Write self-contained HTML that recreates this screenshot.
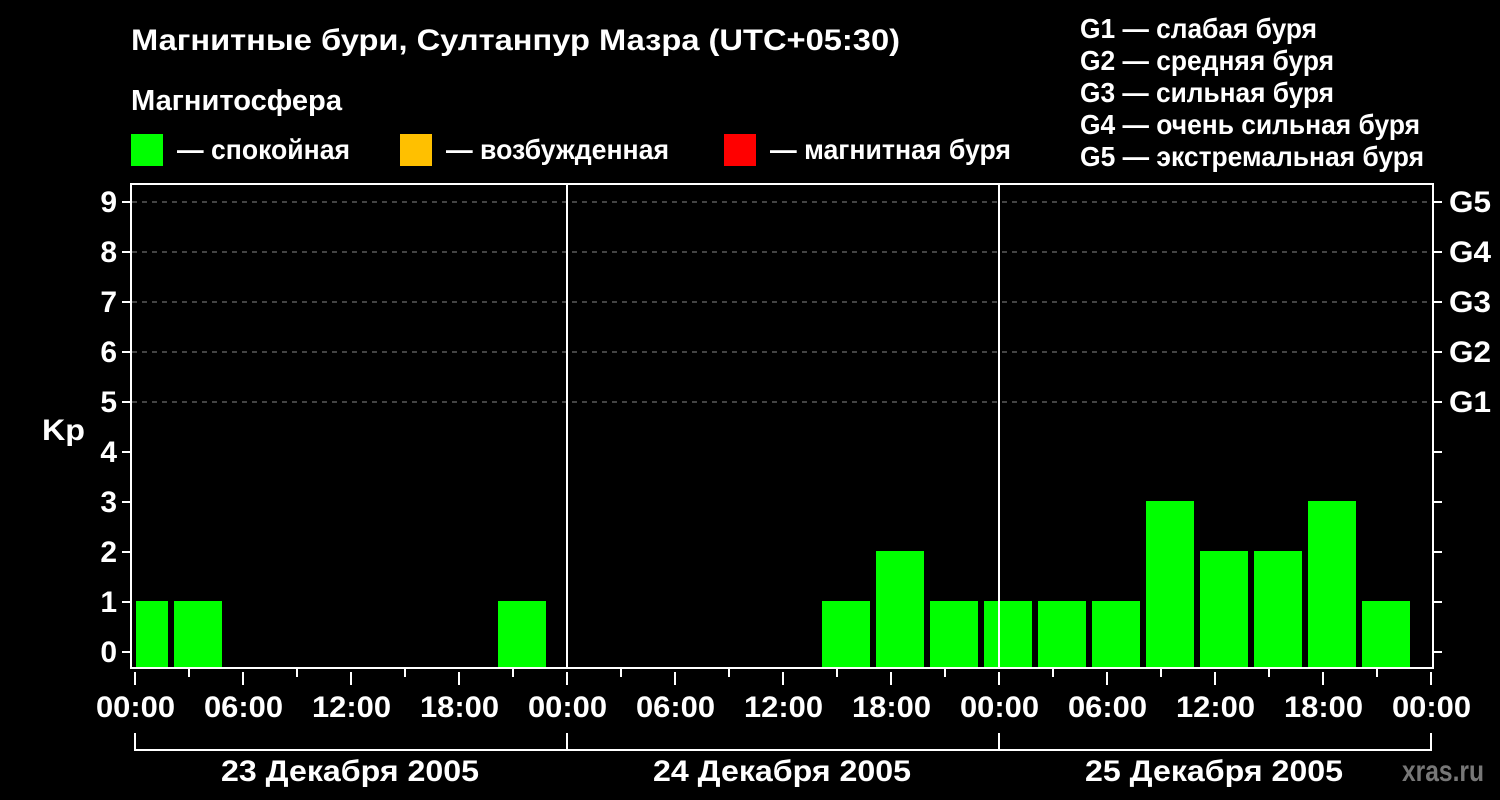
<!DOCTYPE html>
<html><head><meta charset="utf-8"><style>
html,body{margin:0;padding:0;background:#000;width:1500px;height:800px;overflow:hidden}
svg{display:block}
text{font-family:"Liberation Sans",sans-serif;font-weight:bold;fill:#fff}
</style></head><body>
<svg width="1500" height="800" viewBox="0 0 1500 800">
<rect width="1500" height="800" fill="#000"/>
<text x="131" y="50" font-size="30" textLength="769" lengthAdjust="spacingAndGlyphs">Магнитные бури, Султанпур Мазра (UTC+05:30)</text>
<text x="131" y="110" font-size="29" textLength="211" lengthAdjust="spacingAndGlyphs">Магнитосфера</text>
<rect x="131" y="134" width="32" height="32" fill="#00ff00"/>
<text x="177" y="159" font-size="28" textLength="173" lengthAdjust="spacingAndGlyphs">— спокойная</text>
<rect x="400" y="134" width="32" height="32" fill="#ffc000"/>
<text x="446" y="159" font-size="28" textLength="223" lengthAdjust="spacingAndGlyphs">— возбужденная</text>
<rect x="724" y="134" width="32" height="32" fill="#ff0000"/>
<text x="770" y="159" font-size="28" textLength="241" lengthAdjust="spacingAndGlyphs">— магнитная буря</text>
<g font-size="28">
<text x="1080" y="38" textLength="237" lengthAdjust="spacingAndGlyphs">G1 — слабая буря</text>
<text x="1080" y="70" textLength="254" lengthAdjust="spacingAndGlyphs">G2 — средняя буря</text>
<text x="1080" y="102" textLength="254" lengthAdjust="spacingAndGlyphs">G3 — сильная буря</text>
<text x="1080" y="134" textLength="340" lengthAdjust="spacingAndGlyphs">G4 — очень сильная буря</text>
<text x="1080" y="166" textLength="344" lengthAdjust="spacingAndGlyphs">G5 — экстремальная буря</text>
</g>
<g stroke="#888" stroke-width="1" stroke-dasharray="5,5">
<line x1="132" y1="202" x2="1432" y2="202"/>
<line x1="132" y1="252" x2="1432" y2="252"/>
<line x1="132" y1="302" x2="1432" y2="302"/>
<line x1="132" y1="352" x2="1432" y2="352"/>
<line x1="132" y1="402" x2="1432" y2="402"/>
</g>
<g fill="#00ff00">
<rect x="136" y="601" width="32" height="67"/>
<rect x="174" y="601" width="48" height="67"/>
<rect x="498" y="601" width="48" height="67"/>
<rect x="822" y="601" width="48" height="67"/>
<rect x="876" y="551" width="48" height="117"/>
<rect x="930" y="601" width="48" height="67"/>
<rect x="984" y="601" width="48" height="67"/>
<rect x="1038" y="601" width="48" height="67"/>
<rect x="1092" y="601" width="48" height="67"/>
<rect x="1146" y="501" width="48" height="167"/>
<rect x="1200" y="551" width="48" height="117"/>
<rect x="1254" y="551" width="48" height="117"/>
<rect x="1308" y="501" width="48" height="167"/>
<rect x="1362" y="601" width="48" height="67"/>
</g>
<g stroke="#fff" stroke-width="2" fill="none">
<rect x="131" y="184" width="1302" height="484"/>
<line x1="567" y1="184" x2="567" y2="668"/>
<line x1="999" y1="184" x2="999" y2="668"/>
<path d="M122 202h9M122 252h9M122 302h9M122 352h9M122 402h9M122 452h9M122 502h9M122 552h9M122 602h9M122 652h9"/>
<path d="M1433 202h9M1433 252h9M1433 302h9M1433 352h9M1433 402h9M1433 452h9M1433 502h9M1433 552h9M1433 602h9M1433 652h9"/>
<path d="M135 672v13M243 672v13M351 672v13M459 672v13M567 672v13M675 672v13M783 672v13M891 672v13M999 672v13M1107 672v13M1215 672v13M1323 672v13M1431 672v13"/>
<path d="M189 669v8M297 669v8M405 669v8M513 669v8M621 669v8M729 669v8M837 669v8M945 669v8M1053 669v8M1161 669v8M1269 669v8M1377 669v8"/>
<path d="M135 733v17H1431V733M567 733v17M999 733v17"/>
</g>
<g font-size="30" text-anchor="end">
<text x="117" y="212">9</text><text x="117" y="262">8</text><text x="117" y="312">7</text>
<text x="117" y="362">6</text><text x="117" y="412">5</text><text x="117" y="462">4</text>
<text x="117" y="512">3</text><text x="117" y="562">2</text><text x="117" y="612">1</text>
<text x="117" y="662">0</text>
</g>
<text x="42" y="440" font-size="30" textLength="43" lengthAdjust="spacingAndGlyphs">Kp</text>
<g font-size="30">
<text x="1449" y="212" textLength="42" lengthAdjust="spacingAndGlyphs">G5</text>
<text x="1449" y="262" textLength="42" lengthAdjust="spacingAndGlyphs">G4</text>
<text x="1449" y="312" textLength="42" lengthAdjust="spacingAndGlyphs">G3</text>
<text x="1449" y="362" textLength="42" lengthAdjust="spacingAndGlyphs">G2</text>
<text x="1449" y="412" textLength="42" lengthAdjust="spacingAndGlyphs">G1</text>
</g>
<g font-size="30">
<text x="96" y="717" textLength="79" lengthAdjust="spacingAndGlyphs">00:00</text>
<text x="204" y="717" textLength="79" lengthAdjust="spacingAndGlyphs">06:00</text>
<text x="312" y="717" textLength="79" lengthAdjust="spacingAndGlyphs">12:00</text>
<text x="420" y="717" textLength="79" lengthAdjust="spacingAndGlyphs">18:00</text>
<text x="528" y="717" textLength="79" lengthAdjust="spacingAndGlyphs">00:00</text>
<text x="636" y="717" textLength="79" lengthAdjust="spacingAndGlyphs">06:00</text>
<text x="744" y="717" textLength="79" lengthAdjust="spacingAndGlyphs">12:00</text>
<text x="852" y="717" textLength="79" lengthAdjust="spacingAndGlyphs">18:00</text>
<text x="960" y="717" textLength="79" lengthAdjust="spacingAndGlyphs">00:00</text>
<text x="1068" y="717" textLength="79" lengthAdjust="spacingAndGlyphs">06:00</text>
<text x="1176" y="717" textLength="79" lengthAdjust="spacingAndGlyphs">12:00</text>
<text x="1284" y="717" textLength="79" lengthAdjust="spacingAndGlyphs">18:00</text>
<text x="1392" y="717" textLength="79" lengthAdjust="spacingAndGlyphs">00:00</text>
</g>
<g font-size="30">
<text x="221" y="781" textLength="258" lengthAdjust="spacingAndGlyphs">23 Декабря 2005</text>
<text x="653" y="781" textLength="258" lengthAdjust="spacingAndGlyphs">24 Декабря 2005</text>
<text x="1085" y="781" textLength="258" lengthAdjust="spacingAndGlyphs">25 Декабря 2005</text>
</g>
<text x="1402" y="781" font-size="30" textLength="82" lengthAdjust="spacingAndGlyphs" style="fill:#777">xras.ru</text>
</svg>
</body></html>
